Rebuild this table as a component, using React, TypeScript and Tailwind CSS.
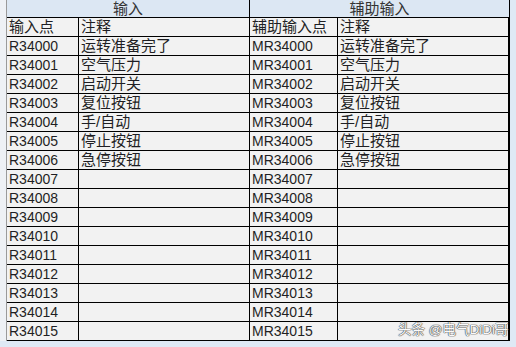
import React from 'react';

const notes = ['运转准备完了', '空气压力', '启动开关', '复位按钮', '手/自动', '停止按钮', '急停按钮'];

const rows = Array.from({ length: 16 }, (_, i) => {
  const n = String(34000 + i);
  return { input: `R${n}`, aux: `MR${n}`, note: notes[i] ?? '' };
});

function Cell({ w, children, last }: { w: string; children?: React.ReactNode; last?: boolean }) {
  return (
    <div className={`${w} h-full flex items-end pl-[2px] pb-[1px] overflow-hidden whitespace-nowrap ${last ? '' : 'border-r border-black'}`}>
      {children}
    </div>
  );
}

function Row({ a, b, c, d }: { a: React.ReactNode; b: React.ReactNode; c: React.ReactNode; d: React.ReactNode }) {
  return (
    <div className="flex h-[19px] border-b border-black bg-[#f2f2f2]">
      <Cell w="w-[72px]">{a}</Cell>
      <Cell w="w-[171px]">{b}</Cell>
      <Cell w="w-[88px]">{c}</Cell>
      <Cell w="w-[171px]">{d}</Cell>
    </div>
  );
}

const Cn = ({ children }: { children: React.ReactNode }) => (
  <span className="text-[15px] leading-[17px]">{children}</span>
);

export default function App() {
  return (
    <div
      className="relative w-[516px] h-[347px] bg-[#dfe9f5] flex text-[14px] leading-[16px] text-[#1f1f24]"
      style={{ fontFamily: '"Liberation Sans", "Noto Sans CJK SC", sans-serif' }}
    >
      {/* left gutter */}
      <div className="w-[7px] h-[341px] bg-[#eef1f5] border-r border-[#9a9a9a]" />

      <div className="w-[503px] h-[341px] flex flex-col border-r border-black">
        {/* group header */}
        <div className="flex h-[18px] border-b border-black bg-[#dce7f3] text-[#333]">
          <div className="w-[243px] border-r border-black flex items-center justify-center">
            <Cn>输入</Cn>
          </div>
          <div className="w-[259px] flex items-center justify-center">
            <Cn>辅助输入</Cn>
          </div>
        </div>

        <Row a={<Cn>输入点</Cn>} b={<Cn>注释</Cn>} c={<Cn>辅助输入点</Cn>} d={<Cn>注释</Cn>} />
        {rows.map((r) => (
          <Row key={r.input} a={r.input} b={<Cn>{r.note}</Cn>} c={r.aux} d={<Cn>{r.note}</Cn>} />
        ))}
      </div>

      {/* watermark */}
      <div className="absolute left-[398px] top-[321px] whitespace-nowrap text-[13.5px] leading-[17px] text-[#fafafa] [text-shadow:0_0_1px_#444,0_0_1px_#444,0_0_1px_#444]">
        头条 @电气DiDi哥
      </div>
    </div>
  );
}
